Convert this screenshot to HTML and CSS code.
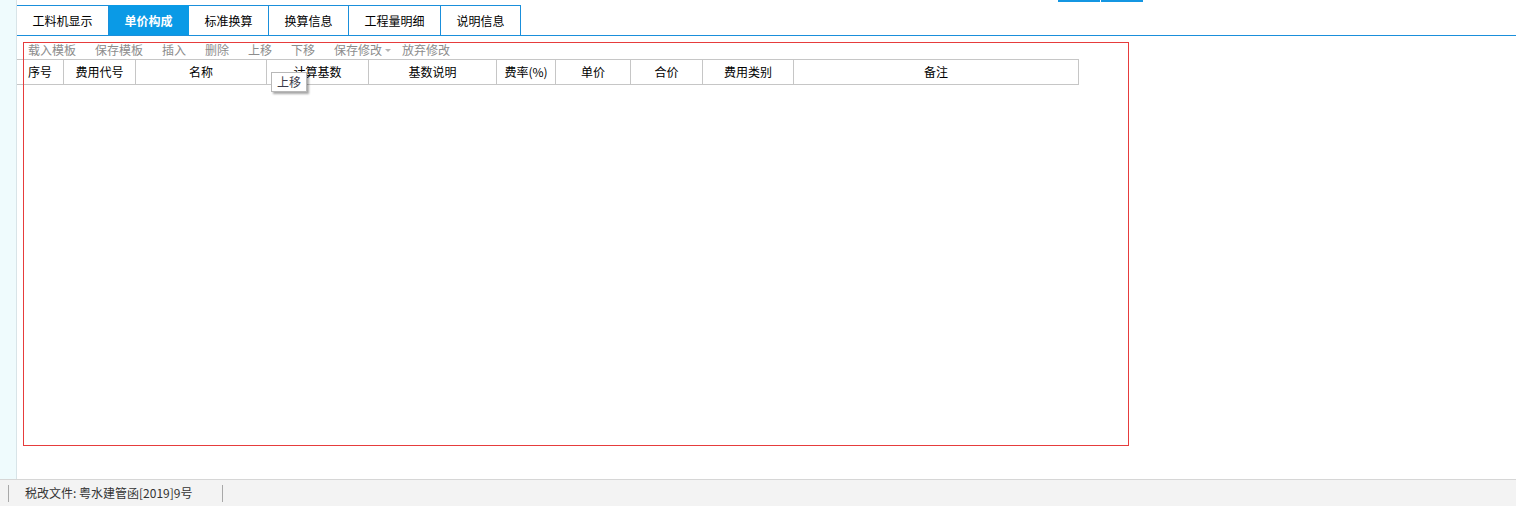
FILE: index.html
```html
<!DOCTYPE html>
<html lang="zh-CN">
<head>
<meta charset="utf-8">
<title>单价构成</title>
<link rel="stylesheet" href="styles.css">
</head>
<body>
<div class="app">
  <div class="main">
    <div class="side"></div>
    <div class="content">
      <div class="topstrip">
        <span class="topbtn"></span><span class="topbtn"></span>
      </div>
      <div class="tabs">
        <div class="tab w92 first">工料机显示</div>
        <div class="tab active">单价构成</div>
        <div class="tab">标准换算</div>
        <div class="tab">换算信息</div>
        <div class="tab w92">工程量明细</div>
        <div class="tab">说明信息</div>
      </div>
      <div class="toolbar">
        <span class="tb">载入模板</span>
        <span class="tb">保存模板</span>
        <span class="tb">插入</span>
        <span class="tb">删除</span>
        <span class="tb">上移</span>
        <span class="tb">下移</span>
        <span class="tb drop">保存修改<i class="caret"></i></span>
        <span class="tb">放弃修改</span>
      </div>
      <div class="thead">
        <div class="th c1">序号</div>
        <div class="th c2">费用代号</div>
        <div class="th c3">名称</div>
        <div class="th c4">计算基数</div>
        <div class="th c5">基数说明</div>
        <div class="th c6">费率(%)</div>
        <div class="th c7">单价</div>
        <div class="th c8">合价</div>
        <div class="th c9">费用类别</div>
        <div class="th c10">备注</div>
      </div>
    </div>
  </div>
  <div class="status">
    <span class="sep"></span>
    <span class="stext">税改文件: 粤水建管函[2019]9号</span>
    <span class="sep"></span>
  </div>
  <div class="highlight"></div>
  <div class="tooltip">上移</div>
</div>
</body>
</html>
```

FILE: styles.css
```css
* { box-sizing: border-box; }
html, body { margin: 0; padding: 0; }
body {
  width: 1516px;
  height: 506px;
  overflow: hidden;
  background: #ffffff;
  font-family: "Noto Sans CJK SC", "Microsoft YaHei", sans-serif;
  font-size: 12px;
  color: #000;
}
.app {
  position: relative;
  width: 1516px;
  height: 506px;
  display: flex;
  flex-direction: column;
}
.main {
  height: 479px;
  display: flex;
}
.side {
  width: 17px;
  background: #effbfd;
  border-right: 1px solid #d8e4e8;
}
.content {
  flex: 1;
  display: flex;
  flex-direction: column;
}
.topstrip {
  height: 5px;
  display: flex;
  gap: 1px;
  padding-left: 1041px;
}
.topbtn {
  width: 42px;
  height: 2px;
  background: #1496e2;
}
.tabs {
  display: flex;
  height: 31px;
  border-bottom: 1px solid #1a8fdb;
}
.tab {
  width: 80px;
  height: 30px;
  border-top: 1px solid #1a8fdb;
  border-right: 1px solid #1a8fdb;
  display: flex;
  justify-content: center;
  align-items: flex-start;
  padding-top: 7px;
  line-height: 16px;
  font-size: 12px;
  color: #000;
}
.tab.w92 { width: 92px; }
.tab.first { width: 92px; }
.tab.active {
  background: #0a9ae6;
  border-color: #0a9ae6;
  color: #fff;
  font-weight: bold;
}
.toolbar {
  margin-top: 6px;
  height: 17px;
  display: flex;
  gap: 19px;
  padding-left: 11px;
  color: #8c8c8c;
  line-height: 15px;
  font-size: 12px;
}
.tb { display: flex; align-items: center; height: 15px; }
.drop { margin-right: -8px; }
.caret {
  display: inline-block;
  margin-left: 3px;
  width: 0;
  height: 0;
  border-left: 3px solid transparent;
  border-right: 3px solid transparent;
  border-top: 3px solid #b5b5b5;
  margin-top: 2px;
}
.thead {
  display: flex;
  height: 26px;
  width: 1062px;
  border-top: 1px solid #c6c6c6;
  border-bottom: 1px solid #c6c6c6;
}
.th {
  border-right: 1px solid #c6c6c6;
  display: flex;
  align-items: center;
  justify-content: center;
  font-size: 12px;
  color: #000;
  line-height: 16px;
}
.c1 { width: 47px; }
.c2 { width: 72px; }
.c3 { width: 131px; }
.c4 { width: 102px; }
.c5 { width: 128px; }
.c6 { width: 59px; }
.c7 { width: 75px; }
.c8 { width: 72px; }
.c9 { width: 91px; }
.c10 { width: 285px; }
.status {
  height: 27px;
  background: #f3f3f3;
  border-top: 1px solid #d6d6d6;
  display: flex;
  align-items: center;
  padding-left: 8px;
}
.sep {
  width: 1px;
  height: 17px;
  background: #a8a8a8;
}
.stext {
  padding-left: 16px;
  width: 213px;
  font-size: 12px;
  color: #333;
  line-height: 16px;
}
.highlight {
  position: absolute;
  left: 23px;
  top: 42px;
  width: 1106px;
  height: 404px;
  border: 1px solid #e63c3c;
  pointer-events: none;
}
.tooltip {
  position: absolute;
  left: 271px;
  top: 72px;
  width: 36px;
  height: 20px;
  background: #fff;
  border: 1px solid #b8b8b8;
  box-shadow: 2px 2px 2px rgba(0,0,0,0.35);
  font-size: 12px;
  color: #3a3a4a;
  display: flex;
  align-items: center;
  justify-content: center;
  line-height: 16px;
}
```
